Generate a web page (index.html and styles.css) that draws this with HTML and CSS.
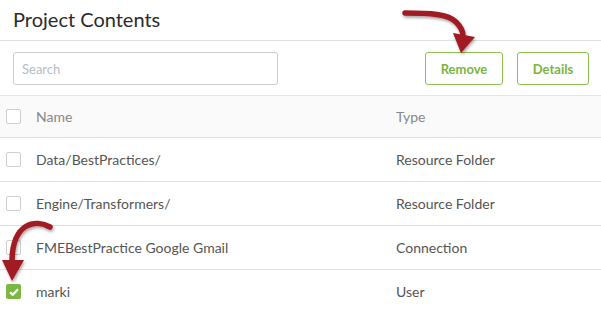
FILE: index.html
```html
<!DOCTYPE html>
<html lang="en">
<head>
    <meta charset="UTF-8">
    <title>Project Contents</title>
    <link rel="stylesheet" href="styles.css">
</head>
<body>
    <div class="panel">
        <div class="panel-title">Project Contents</div>
        <div class="toolbar">
            <input type="text" class="search" placeholder="Search">
            <div class="actions">
                <button class="btn">Remove</button>
                <button class="btn">Details</button>
            </div>
        </div>
        <table class="contents">
            <thead>
                <tr>
                    <th class="col-check"><span class="check"></span></th>
                    <th class="col-name">Name</th>
                    <th>Type</th>
                </tr>
            </thead>
            <tbody>
                <tr>
                    <td class="col-check"><span class="check"></span></td>
                    <td class="col-name">Data/BestPractices/</td>
                    <td>Resource Folder</td>
                </tr>
                <tr>
                    <td class="col-check"><span class="check"></span></td>
                    <td class="col-name">Engine/Transformers/</td>
                    <td>Resource Folder</td>
                </tr>
                <tr>
                    <td class="col-check"><span class="check"></span></td>
                    <td class="col-name">FMEBestPractice Google Gmail</td>
                    <td>Connection</td>
                </tr>
                <tr>
                    <td class="col-check"><span class="check checked">
                        <svg width="10" height="8" viewBox="0 0 10 8"><path d="M1 4.2 L3.8 6.8 L9 1.2" fill="none" stroke="#fff" stroke-width="2.2"/></svg>
                    </span></td>
                    <td class="col-name">marki</td>
                    <td>User</td>
                </tr>
            </tbody>
        </table>
    </div>
    <svg class="arrows" width="601" height="309" viewBox="0 0 601 309">
        <defs>
            <filter id="shadow" x="-20%" y="-20%" width="140%" height="140%">
                <feDropShadow dx="1" dy="2" stdDeviation="1.5" flood-color="#000" flood-opacity="0.35"/>
            </filter>
        </defs>
        <g filter="url(#shadow)" fill="#a01a24">
            <path d="M405 13 C 430 13, 448 14, 456 22 C 461 27, 463 31, 463 36" fill="none" stroke="#a01a24" stroke-width="5.5" stroke-linecap="round"/>
            <polygon points="453,33 475,37 461,53"/>
            <path d="M50 227 C 36 219, 13 222, 12 260" fill="none" stroke="#a01a24" stroke-width="5.5" stroke-linecap="round"/>
            <polygon points="2,260 24,260 12,281"/>
        </g>
    </svg>
</body>
</html>
```

FILE: styles.css
```css
body {
    margin: 0;
    background: #fff;
    font-family: 'Lato', 'Open Sans', sans-serif;
    color: #555;
}
.panel {
    width: 601px;
}
.panel-title {
    height: 40px;
    padding-left: 13px;
    font-size: 20px;
    line-height: 38px;
    color: #2b2b2b;
    border-bottom: 1px solid #dde2e2;
}
.toolbar {
    display: flex;
    align-items: center;
    justify-content: space-between;
    padding: 11px 12px 10px 13px;
    border-bottom: 1px solid #e2e8e8;
}
.search {
    width: 265px;
    height: 33px;
    box-sizing: border-box;
    border: 1px solid #c8cdd0;
    border-radius: 3px;
    padding: 0 8px;
    font-family: inherit;
    font-size: 13px;
    color: #555;
}
.search::placeholder {
    color: #b5bcc6;
}
.actions {
    display: flex;
    gap: 14px;
}
.btn {
    height: 33px;
    box-sizing: border-box;
    background: #fff;
    border: 1px solid #8cc152;
    border-radius: 3px;
    color: #7bb53e;
    font-family: inherit;
    font-weight: bold;
    font-size: 13px;
    padding: 0 11px;
}
.btn:first-child {
    width: 78px;
}
.btn:last-child {
    width: 72px;
}
.contents {
    width: 100%;
    border-collapse: collapse;
    font-size: 14px;
}
.contents th {
    height: 41px;
    background: #fafafa;
    font-weight: normal;
    text-align: left;
    color: #888;
    padding: 0;
}
.contents td {
    height: 43px;
    padding: 0;
    color: #555;
    border-top: 1px solid #dde4e4;
}
.contents thead tr {
    border-bottom: 1px solid #dde4e4;
}
.col-check {
    width: 30px;
    padding-left: 6px !important;
}
.col-name {
    width: 360px;
}
.check {
    display: block;
    width: 13px;
    height: 13px;
    border: 1px solid #cfcfcf;
    border-radius: 2px;
    background: #fff;
}
.check.checked {
    width: 15px;
    height: 15px;
    border: none;
    background: #7bb843;
    display: flex;
    align-items: center;
    justify-content: center;
}
.arrows {
    position: absolute;
    left: 0;
    top: 0;
    pointer-events: none;
}
```
